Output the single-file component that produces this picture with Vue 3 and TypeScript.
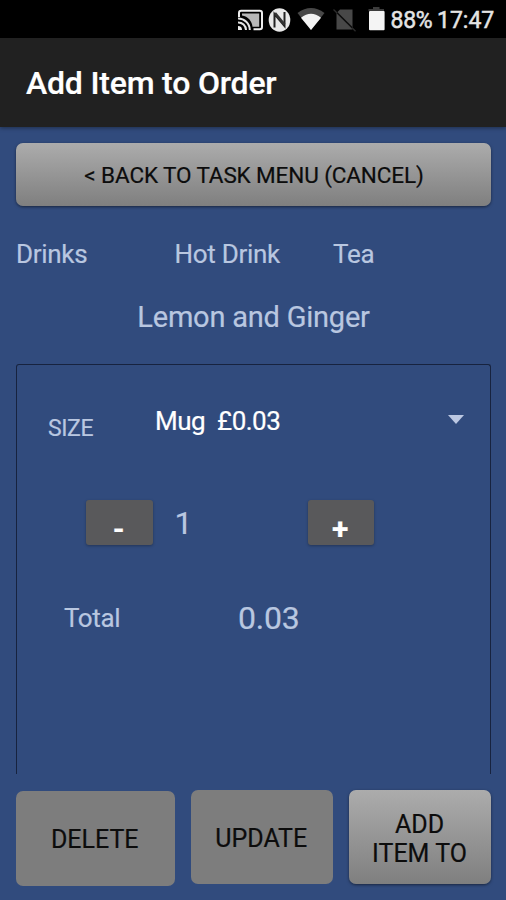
<script setup lang="ts">
import { computed, ref } from 'vue'

const categories: string[] = ['Drinks', 'Hot Drink', 'Tea']
const unitPrice = 0.03
const quantity = ref(1)
const total = computed(() => (unitPrice * quantity.value).toFixed(2))

function decrease(): void {
  if (quantity.value > 1) quantity.value--
}
function increase(): void {
  quantity.value++
}
</script>

<template>
  <div class="screen">
    <div class="status">
      <svg class="icons" viewBox="0 0 152 38" width="152" height="38">
        <!-- cast -->
        <path d="M2 17V13q0-2.200 2.200-2.200H22.800q2.200 0 2.200 2.200V27q0 2.200-2.200 2.200H16.500" fill="none" stroke="#eee" stroke-width="2" />
        <path d="M5 15.500V13.500H22.200V26.700H15.500C15 21 11 16.500 5 15.500Z" fill="#b8b8b8" />
        <path d="M1 18.600A11.500 11.500 0 0 1 12.800 30M1 22.400A7.800 7.800 0 0 1 9 30" fill="none" stroke="#e4e4e4" stroke-width="2" />
        <path d="M1 26A4 4 0 0 1 5 30H1Z" fill="#eee" />
        <!-- nfc -->
        <ellipse cx="42.500" cy="20" rx="10.800" ry="11.800" fill="#e8e8e8" />
        <path d="M37.500 27.500V14L47.500 26V12" fill="none" stroke="#222" stroke-width="2" />
        <path d="M38 13L47.500 24.500" fill="none" stroke="#333" stroke-width="2.600" />
        <!-- wifi -->
        <path d="M60.500 13Q74 3 87.500 13L74 30Z" fill="#484848" />
        <path d="M64 17.800Q74 9.500 84 17.800L74 30Z" fill="#f4f4f4" />
        <!-- no sim -->
        <path d="M99.500 13L103 9.500H115.500V29.500H99.500Z" fill="#484848" />
        <path d="M97 9.800L118.500 31" stroke="#0c0c0c" stroke-width="1.600" />
        <path d="M96.500 9.500L100 13M115 27.800L118.500 31.200" stroke="#2c2c2c" stroke-width="1.200" />
        <!-- battery -->
        <path d="M136 7H142.500V9H147V11H131.500V9H136Z" fill="#3c3c3c" />
        <rect x="132" y="11" width="15.600" height="19.300" rx="1" fill="#f4f4f4" />
      </svg>
      <span class="battery">88%</span>
      <span class="clock">17:47</span>
    </div>

    <header class="bar"><h1>Add Item to Order</h1></header>

    <main class="body">
      <button class="btn raised back"><span>&lt; BACK TO TASK MENU (CANCEL)</span></button>

      <div class="crumbs">
        <span v-for="name in categories" :key="name">{{ name }}</span>
      </div>

      <div class="item"><span>Lemon and Ginger</span></div>

      <section class="card">
        <div class="size-row">
          <span class="size-label">SIZE</span>
          <span class="size-value">Mug&nbsp; £0.03</span>
          <svg class="arrow" viewBox="0 0 16 9" width="16" height="9"><path d="M0 0H16L8 9Z" fill="#bcc8e2" /></svg>
        </div>
        <div class="qty-row">
          <button class="step" @click="decrease"><span>-</span></button>
          <span class="qty">{{ quantity }}</span>
          <button class="step" @click="increase"><span>+</span></button>
        </div>
        <div class="total-row">
          <span class="total-label">Total</span>
          <span class="total">{{ total }}</span>
        </div>
      </section>

      <footer class="actions">
        <button class="btn flat delete"><span>DELETE</span></button>
        <button class="btn flat update"><span>UPDATE</span></button>
        <button class="btn raised add"><span>ADD<br />ITEM TO</span></button>
      </footer>
    </main>
  </div>
</template>

<style>
body {
  margin: 0;
  background: #314b7d;
}
</style>

<style scoped>
.screen {
  width: 506px;
  height: 900px;
  overflow: hidden;
  display: flex;
  flex-direction: column;
  background: #314b7d;
  color: #b9c7e0;
  font-family: Roboto, "Liberation Sans", sans-serif;
  white-space: nowrap;
  -webkit-text-stroke: 0.2px;
}
.status {
  height: 38px;
  flex: none;
  display: flex;
  align-items: center;
  padding-left: 237px;
  background: #000;
  color: #e4e4e4;
  font-size: 23px;
  -webkit-text-stroke: 0.5px;
}
.icons {
  flex: none;
}
.battery {
  width: 46.5px;
  padding: 3px 0 0 1.5px;
  letter-spacing: -0.3px;
}
.clock {
  padding-top: 3px;
}
.bar {
  height: 89px;
  flex: none;
  box-sizing: border-box;
  display: flex;
  align-items: center;
  padding-left: 26px;
  background: #212121;
  box-shadow: 0 1px 4px rgba(0, 0, 0, 0.4);
}
h1 {
  margin: 0;
  color: #fff;
  font-size: 32px;
  font-weight: 500;
  letter-spacing: -0.2px;
}
.body {
  flex: 1;
  display: flex;
  flex-direction: column;
  padding: 16px 15px 0 16px;
}
button {
  border: 0;
  margin: 0;
  padding: 0;
  font-family: inherit;
  display: flex;
  align-items: center;
  justify-content: center;
}
.btn {
  color: #0c0c0c;
  border-radius: 7px;
  font-size: 25px;
  line-height: 29px;
}
.raised {
  background: linear-gradient(#acacac, #7f7f7f);
  box-shadow: 0 1px 3px rgba(0, 0, 0, 0.5);
}
.flat {
  background: #7d7d7d;
}
.back {
  height: 63px;
  flex: none;
  font-size: 22.5px;
  padding: 2px 0 0 1px;
  letter-spacing: -0.12px;
}
.crumbs {
  display: grid;
  grid-template-columns: 158.5px 158.5px 1fr;
  height: 48px;
  line-height: 48px;
  margin-top: 23.5px;
  font-size: 26px;
  letter-spacing: -0.3px;
}
.item {
  height: 48px;
  line-height: 48px;
  margin-top: 15.5px;
  font-size: 29px;
  letter-spacing: -0.22px;
  text-align: center;
}
.card {
  height: 410px;
  flex: none;
  box-sizing: border-box;
  margin-top: 23px;
  border: 1px solid #17233f;
  border-bottom: 0;
  border-radius: 3px 3px 0 0;
  padding-top: 31px;
}
.size-row {
  display: flex;
  align-items: center;
  height: 50px;
  padding: 0 26px 0 31px;
}
.size-label {
  width: 107px;
  padding-top: 14px;
  font-size: 23px;
  letter-spacing: -0.4px;
}
.size-value {
  flex: 1;
  color: #fff;
  font-size: 26px;
  letter-spacing: -0.5px;
}
.arrow {
  margin-bottom: 3px;
}
.qty-row {
  display: flex;
  align-items: center;
  height: 45px;
  margin-top: 54px;
  padding-left: 69px;
}
.step {
  width: 66.5px;
  height: 44.5px;
  border-radius: 3px;
  background: #59595b;
  color: #fff;
  font-size: 30px;
  font-weight: 700;
  padding: 12px 1px 0 0;
  box-sizing: border-box;
  box-shadow: 0 1px 3px rgba(0, 0, 0, 0.3);
}
.qty {
  width: 133px;
  padding-left: 22px;
  font-size: 32px;
}
.total-row {
  display: flex;
  align-items: center;
  height: 50px;
  margin-top: 48px;
  padding-left: 47px;
}
.total-label {
  width: 174px;
  font-size: 26px;
  letter-spacing: -0.4px;
}
.total {
  font-size: 32px;
  letter-spacing: -0.2px;
}
.actions {
  display: grid;
  grid-template-columns: 158.5px 142.5px 142px;
  column-gap: 16px;
  align-items: start;
  margin-top: 16px;
}
.actions .btn {
  height: 94px;
  padding: 2px 1px 0 0;
}
.actions .add {
  padding-top: 4px;
}
.actions .delete {
  height: 95px;
  margin-top: 1px;
  padding-top: 1px;
}
</style>
